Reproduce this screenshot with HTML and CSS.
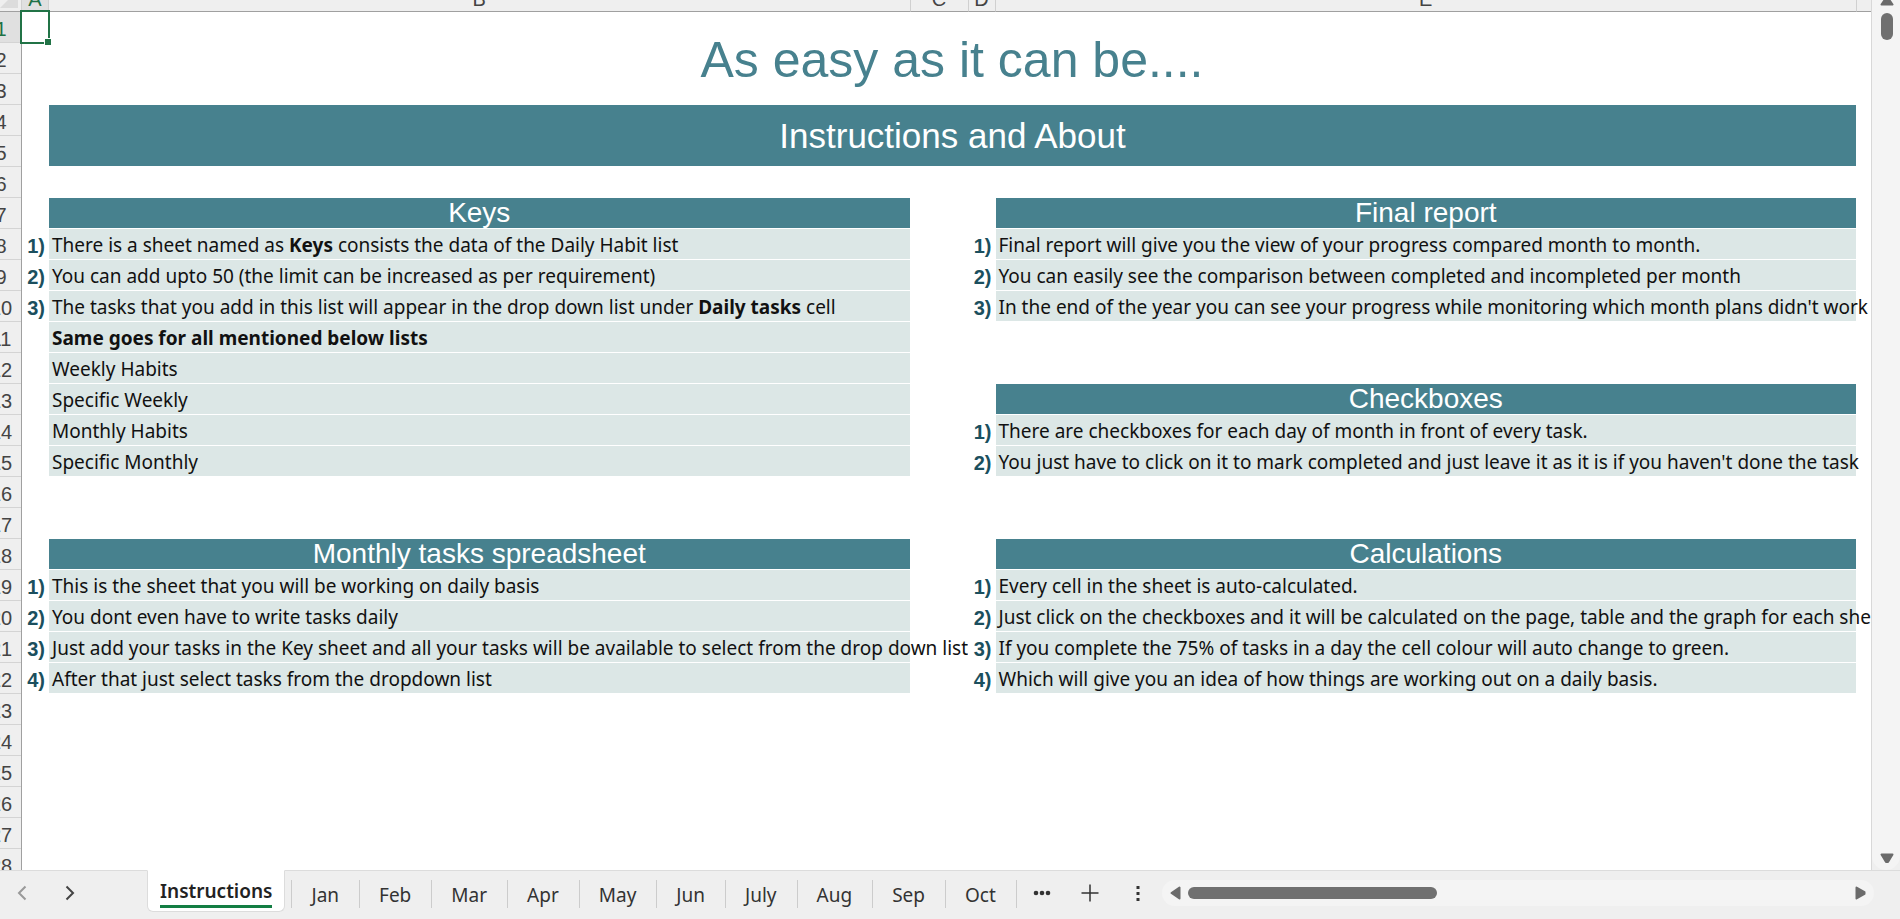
FILE: index.html
```html
<!DOCTYPE html>
<html lang="en">
<head>
<meta charset="utf-8">
<title>Instructions</title>
<link rel="stylesheet" href="styles.css">
</head>
<body>
<main class="workbook">
  <div class="workspace">
    <div class="sheet">
      <table class="grid">
        <colgroup><col class="col-head"><col class="col-num"><col><col class="col-gap"><col class="col-num"><col><col class="col-rest"></colgroup>
        <thead>
          <tr><th class="corner"><svg width="18" height="18" viewBox="0 0 18 18"><path d="M18 0V18H0Z" fill="#dcdcdc"/></svg></th><th class="active">A</th><th>B</th><th>C</th><th>D</th><th>E</th><th></th></tr>
        </thead>
        <tbody>
          <tr><th class="active">1</th><td class="selected"><span class="handle"></span></td><td class="title" colspan="4" rowspan="3">As easy as it can be....</td><td></td></tr>
          <tr><th>2</th><td></td><td></td></tr>
          <tr><th>3</th><td></td><td></td></tr>
          <tr><th>4</th><td></td><td class="banner" colspan="4" rowspan="2">Instructions and About</td><td></td></tr>
          <tr><th>5</th><td></td><td></td></tr>
          <tr><th>6</th><td></td><td></td><td></td><td></td><td></td><td></td></tr>
          <tr><th>7</th><td></td><td class="head">Keys</td><td></td><td></td><td class="head">Final report</td><td></td></tr>
          <tr><th>8</th><td class="num">1)</td><td class="item">There is a sheet named as <b>Keys</b> consists the data of the Daily Habit list</td><td></td><td class="num">1)</td><td class="item">Final report will give you the view of your progress compared month to month.</td><td></td></tr>
          <tr><th>9</th><td class="num">2)</td><td class="item">You can add upto 50 (the limit can be increased as per requirement)</td><td></td><td class="num">2)</td><td class="item">You can easily see the comparison between completed and incompleted per month</td><td></td></tr>
          <tr><th>10</th><td class="num">3)</td><td class="item">The tasks that you add in this list will appear in the drop down list under <b>Daily tasks</b> cell</td><td></td><td class="num">3)</td><td class="item">In the end of the year you can see your progress while monitoring which month plans didn't work</td><td></td></tr>
          <tr><th>11</th><td></td><td class="item"><b>Same goes for all mentioned below lists</b></td><td></td><td></td><td></td><td></td></tr>
          <tr><th>12</th><td></td><td class="item">Weekly Habits</td><td></td><td></td><td></td><td></td></tr>
          <tr><th>13</th><td></td><td class="item">Specific Weekly</td><td></td><td></td><td class="head">Checkboxes</td><td></td></tr>
          <tr><th>14</th><td></td><td class="item">Monthly Habits</td><td></td><td class="num">1)</td><td class="item">There are checkboxes for each day of month in front of every task.</td><td></td></tr>
          <tr><th>15</th><td></td><td class="item">Specific Monthly</td><td></td><td class="num">2)</td><td class="item">You just have to click on it to mark completed and just leave it as it is if you haven't done the task</td><td></td></tr>
          <tr><th>16</th><td></td><td></td><td></td><td></td><td></td><td></td></tr>
          <tr><th>17</th><td></td><td></td><td></td><td></td><td></td><td></td></tr>
          <tr><th>18</th><td></td><td class="head">Monthly tasks spreadsheet</td><td></td><td></td><td class="head">Calculations</td><td></td></tr>
          <tr><th>19</th><td class="num">1)</td><td class="item">This is the sheet that you will be working on daily basis</td><td></td><td class="num">1)</td><td class="item">Every cell in the sheet is auto-calculated.</td><td></td></tr>
          <tr><th>20</th><td class="num">2)</td><td class="item">You dont even have to write tasks daily</td><td></td><td class="num">2)</td><td class="item">Just click on the checkboxes and it will be calculated on the page, table and the graph for each sheet</td><td></td></tr>
          <tr><th>21</th><td class="num">3)</td><td class="item">Just add your tasks in the Key sheet and all your tasks will be available to select from the drop down list</td><td></td><td class="num">3)</td><td class="item">If you complete the 75% of tasks in a day the cell colour will auto change to green.</td><td></td></tr>
          <tr><th>22</th><td class="num">4)</td><td class="item">After that just select tasks from the dropdown list</td><td></td><td class="num">4)</td><td class="item">Which will give you an idea of how things are working out on a daily basis.</td><td></td></tr>
          <tr><th>23</th><td></td><td></td><td></td><td></td><td></td><td></td></tr>
          <tr><th>24</th><td></td><td></td><td></td><td></td><td></td><td></td></tr>
          <tr><th>25</th><td></td><td></td><td></td><td></td><td></td><td></td></tr>
          <tr><th>26</th><td></td><td></td><td></td><td></td><td></td><td></td></tr>
          <tr><th>27</th><td></td><td></td><td></td><td></td><td></td><td></td></tr>
          <tr><th>28</th><td></td><td></td><td></td><td></td><td></td><td></td></tr>
        </tbody>
      </table>
    </div>
    <div class="vscroll">
      <button class="arrow" aria-label="Scroll up"><svg width="14" height="11" viewBox="0 0 14 11"><path d="M7 1.500L12.500 9.500H1.500Z" class="tri"/></svg></button>
      <div class="vthumb"></div>
      <button class="arrow last" aria-label="Scroll down"><svg width="14" height="11" viewBox="0 0 14 11"><path d="M1.500 1.500H12.500L8 9H6Z" class="tri"/></svg></button>
    </div>
  </div>
  <footer class="bar">
    <button class="nav off" aria-label="Previous sheet"><svg width="10" height="16" viewBox="0 0 10 16"><path d="M8.500 1.500L2 8L8.500 14.500"/></svg></button>
    <button class="nav" aria-label="Next sheet"><svg width="10" height="16" viewBox="0 0 10 16"><path d="M1.500 1.500L8 8L1.500 14.500"/></svg></button>
    <nav class="tabs">
      <button class="tab current"><span>Instructions</span></button>
      <button class="tab">Jan</button>
      <button class="tab">Feb</button>
      <button class="tab">Mar</button>
      <button class="tab">Apr</button>
      <button class="tab">May</button>
      <button class="tab">Jun</button>
      <button class="tab">July</button>
      <button class="tab">Aug</button>
      <button class="tab">Sep</button>
      <button class="tab">Oct</button>
    </nav>
    <div class="tools">
      <button aria-label="More sheets"><svg width="18" height="18" viewBox="0 0 18 18"><g fill="#333"><circle cx="3" cy="9" r="2.300"/><circle cx="9" cy="9" r="2.300"/><circle cx="15" cy="9" r="2.300"/></g></svg></button>
      <button aria-label="New sheet"><svg width="18" height="18" viewBox="0 0 18 18"><path d="M9 .5V17.500M.5 9H17.500" stroke="#333" stroke-width="1.500"/></svg></button>
      <button aria-label="Sheet options"><svg width="18" height="18" viewBox="0 0 18 18"><path d="M7.500 2h3v3h-3zM7.500 8h3v3h-3zM7.500 14h3v3h-3z" fill="#333"/></svg></button>
    </div>
    <div class="hscroll">
      <button class="arrow" aria-label="Scroll left"><svg width="11" height="14" viewBox="0 0 11 14"><path d="M1.500 7L9.500 1.500V12.500Z" class="tri"/></svg></button>
      <div class="hthumb"></div>
      <button class="arrow last" aria-label="Scroll right"><svg width="11" height="14" viewBox="0 0 11 14"><path d="M1.500 1.500L9.500 6V8L1.500 12.500Z" class="tri"/></svg></button>
    </div>
  </footer>
</main>
</body>
</html>
```
FILE: styles.css
```css
* { box-sizing: border-box; }
body { margin: 0; background: #efefef; font-family: "Liberation Sans", Arial, sans-serif; }
button { border: 0; padding: 0; background: none; font: inherit; color: inherit; }
svg { display: block; }

.workbook { display: flex; flex-direction: column; height: 100vh; overflow: hidden; }
.workspace { display: flex; flex: 1; min-height: 0; }
.sheet { flex: 1; min-width: 0; overflow: hidden; background: #fff; border-right: 1px solid #d8d8d8; }

/* The grid is scrolled slightly past its top-left corner. */
.grid { table-layout: fixed; border-collapse: separate; border-spacing: 0; width: calc(100% + 19px); margin: -18px 0 0 -19px; }
.col-head { width: 40px; }
.col-num { width: 27px; }
.col-gap { width: 58px; }
.col-rest { width: 15px; }

th { padding: 0 0 1px; height: 31px; background: #efefef; color: #444; font-size: 20px; font-weight: 400; line-height: 24px; border-bottom: 1px solid #d4d4d4; vertical-align: bottom; }
thead th { height: 30px; padding: 4px 0 0; border-bottom-color: #a0a0a0; border-left: 1px solid #d0d0d0; vertical-align: middle; }
th.active { background: #e0e0e0; color: #1e7145; }
.corner svg { margin-left: auto; margin-right: 3px; }

td { padding: 0; height: 31px; white-space: nowrap; line-height: 28px; }
tbody th + td { border-left: 1px solid #a0a0a0; }
.title { padding-top: 2px; font-size: 50px; line-height: 60px; text-align: center; color: #47818e; }
.banner, .head { background: #47818e; background-clip: padding-box; color: #fff; text-align: center; border-left: 1px solid #fff; border-bottom: 1px solid #fff; }
.banner { font-size: 35px; line-height: 40px; }
.head { font-size: 28px; }
.item { padding: 2px 0 0 3px; font-family: "Noto Sans", sans-serif; font-size: 19px; color: #111; background: #dce7e6; background-clip: padding-box; border-left: 1px solid #fff; border-bottom: 1px solid #fff; }
.num { position: relative; padding: 2px 3px 0 0; text-align: right; font-size: 20px; font-weight: 700; color: #1b4f5e; background: #fff; }

.selected { position: relative; }
.selected::after { content: ""; position: absolute; inset: -2px -2px -1px -2px; border: 2px solid #217346; }
.handle { position: absolute; z-index: 1; right: -4px; bottom: -3px; width: 8px; height: 8px; background: #217346; border: 1px solid #fff; }

.vscroll { display: flex; flex-direction: column; align-items: center; width: 28px; padding: 0 0 4px 2px; background: #f4f4f4; border-radius: 0 0 14px 14px; overflow: hidden; }
.vscroll .arrow:first-child { margin-top: -5px; }
.vthumb { width: 12px; height: 27px; margin-top: 7px; border-radius: 6px; background: #707070; }
.vscroll .last { margin-top: auto; margin-bottom: 2px; }
.tri { fill: #6b6b6b; stroke: #6b6b6b; stroke-width: 2; stroke-linejoin: round; }

.bar { display: flex; align-items: center; height: 49px; padding: 0 26px 5px 17px; background: #efefef; border-top: 1px solid #dcdcdc; font-family: "Noto Sans", sans-serif; font-size: 19px; color: #333; }
.nav { width: 10px; margin-right: 38px; }
.nav path { fill: none; stroke: #444; stroke-width: 2; }
.nav.off path { stroke: #999; }
.tabs { display: flex; align-self: flex-start; align-items: flex-start; margin-left: 34px; }
.tab { height: 28px; margin-top: 9px; padding: 2px 20px 0 19px; line-height: 24px; border-right: 1px solid #ccc; }
.tab.current { height: 42px; margin: -1px 6px 0 0; padding: 5px 12px 0; background: #fff; border: 1px solid #dcdcdc; border-top-color: #fff; border-radius: 0 0 6px 6px; font-weight: 600; color: #222; }
.tab.current span { display: block; line-height: 24px; padding-bottom: 2px; border-bottom: 3px solid #137e43; }
.tab.current + .tab { border-left: 1px solid #ccc; }
.tools { display: flex; gap: 30px; margin-left: 16px; }
.hscroll { display: flex; flex: 1; align-items: center; height: 26px; margin-left: 15px; padding: 0 8px; border-radius: 13px; background: #f4f4f4; }
.hthumb { width: 249px; height: 12px; margin-left: 7px; border-radius: 6px; background: #707070; }
.hscroll .last { margin-left: auto; }
```
